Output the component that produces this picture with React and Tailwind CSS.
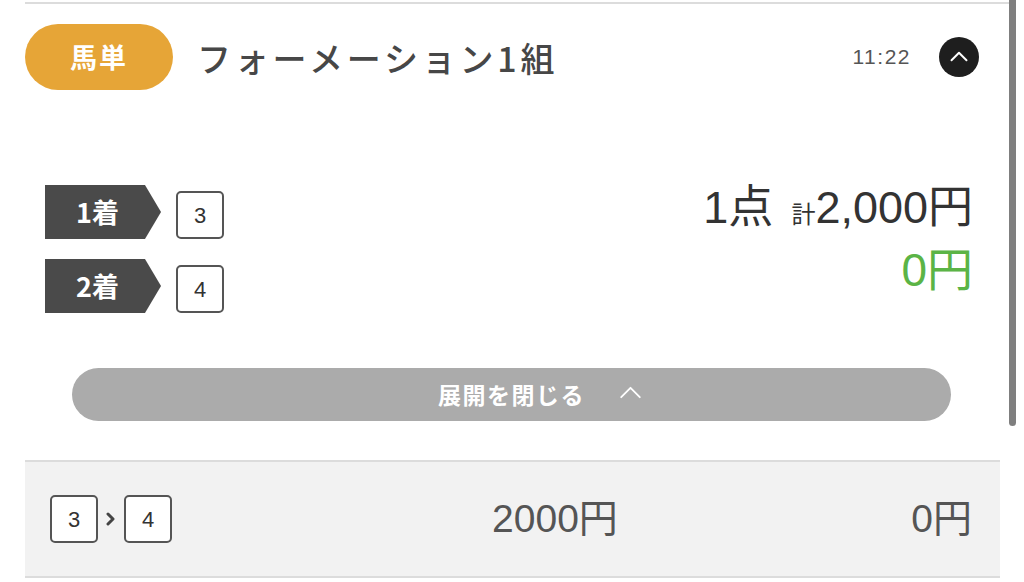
import React from 'react';

const jp = { fontFamily: '"Noto Sans CJK JP", "Liberation Sans", sans-serif' };
const num = { fontFamily: '"Liberation Sans", "Noto Sans CJK JP", sans-serif' };

const ChevronUp = ({ className, stroke = 2.5 }) => (
  <svg viewBox="0 0 24 14" className={className} fill="none">
    <path d="M2 12 L12 2 L22 12" stroke="currentColor" strokeWidth={stroke} strokeLinecap="round" strokeLinejoin="round" />
  </svg>
);

const NumBox = ({ n }) => (
  <div
    className="w-[48px] h-[48px] border-2 border-[#555] rounded-[5px] bg-white flex items-center justify-center text-[22px] text-[#333]"
    style={{ fontFamily: '"Liberation Sans", sans-serif' }}
  >
    {n}
  </div>
);

const PlaceLabel = ({ text }) => (
  <div className="w-[116px] h-[54px] bg-[#4a4a4a] [clip-path:polygon(0_0,100px_0,116px_50%,100px_100%,0_100%)] flex items-center pl-[31px] text-white text-[27px] font-bold">
    {text}
  </div>
);

export default function App() {
  return (
    <div className="relative w-[1024px] h-[582px] bg-white overflow-hidden" style={jp}>
      <div className="ml-[25px] w-[985px]">
        <div className="h-[2px] mt-[2px] bg-[#dcdcdc]" />

        {/* header */}
        <div className="flex items-center mt-[20px] h-[66px] pr-[31px]">
          <div className="w-[148px] h-[66px] rounded-full bg-[#e6a537] flex items-center justify-center text-white text-[27px] font-bold tracking-[2px]">
            馬単
          </div>
          <div className="ml-[24px] text-[34px] font-medium text-[#474747] tracking-[3.8px]">
            フォーメーション1組
          </div>
          <div className="flex-1" />
          <div className="text-[21px] text-[#555] tracking-[1.5px]" style={{ fontFamily: '"Liberation Sans", sans-serif' }}>
            11:22
          </div>
          <div className="ml-[28px] w-[40px] h-[40px] rounded-full bg-[#1e1e1e] flex items-center justify-center text-white">
            <ChevronUp className="w-[18px] h-[11px] -mt-[2px]" stroke={2.6} />
          </div>
        </div>

        {/* body */}
        <div className="flex mt-[95px] pl-[20px] pr-[37px]">
          <div className="flex flex-col gap-[20px]">
            <div className="flex items-end gap-[15px]">
              <PlaceLabel text="1着" />
              <NumBox n="3" />
            </div>
            <div className="flex items-end gap-[15px]">
              <PlaceLabel text="2着" />
              <NumBox n="4" />
            </div>
          </div>
          <div className="flex-1 flex flex-col items-end" style={num}>
            <div className="flex items-baseline text-[#333] leading-none">
              <span className="text-[45px]">1点</span>
              <span className="text-[24px] ml-[18px]">計</span>
              <span className="text-[45px]">2,000円</span>
            </div>
            <div className="text-[46px] text-[#5bb446] leading-none mt-[17px]">0円</div>
          </div>
        </div>

        {/* close button */}
        <div className="ml-[47px] mt-[55px] w-[879px] h-[53px] rounded-full bg-[#ababab] flex items-center justify-center text-white text-[23px] font-bold">
          <span className="relative tracking-[1.5px]">
            展開を閉じる
            <ChevronUp className="absolute left-full top-[9px] ml-[33px] w-[25px] h-[13px]" stroke={2} />
          </span>
        </div>

        {/* bet row */}
        <div className="mt-[39px] w-[975px] h-[118px] bg-[#f2f2f2] border-t-2 border-b-2 border-[#dcdcdc] flex items-center" style={num}>
          <div className="w-[360px] pl-[25px] flex items-center">
            <NumBox n="3" />
            <svg viewBox="0 0 10 14" className="w-[10px] h-[14px] mx-[8px] text-[#444]" fill="none">
              <path d="M2 2 L7 7 L2 12" stroke="currentColor" strokeWidth="3" strokeLinecap="round" strokeLinejoin="round" />
            </svg>
            <NumBox n="4" />
          </div>
          <div className="w-[340px] text-center text-[39px] text-[#555]">2000円</div>
          <div className="flex-1 text-right pr-[28px] text-[39px] text-[#555]">0円</div>
        </div>
      </div>

      {/* scrollbar */}
      <div className="absolute top-0 left-[1009px] w-[7px] h-[426px] rounded-b-full bg-[#7f7f7f]" />
    </div>
  );
}
